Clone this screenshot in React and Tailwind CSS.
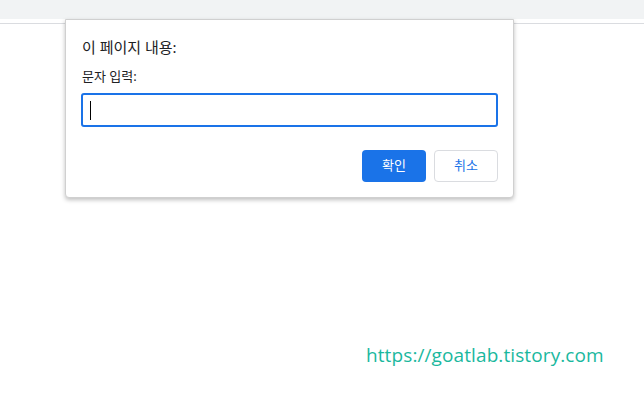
export default function App() {
  return (
    <div
      className="relative w-[644px] h-[413px] bg-white overflow-hidden"
      style={{ fontFamily: '"Noto Sans", "Noto Sans CJK KR", sans-serif' }}
    >
      {/* browser chrome strip */}
      <div className="h-[19px] bg-[#f1f3f4]" />
      <div className="h-[4px]" />
      <div className="h-px bg-[#dadce0]" />

      {/* prompt dialog */}
      <div className="absolute left-[65px] top-[19px] w-[449px] h-[179px] bg-white border border-[#d0d0d0] rounded-b-[4px] shadow-[0_2px_4px_rgba(0,0,0,0.25)] px-[15px]">
        <div className="pt-[17px] pl-px text-[15px] leading-[20px] text-[#202124]">이 페이지 내용:</div>
        <div className="mt-[10px] pl-px text-[13px] leading-[18px] text-[#202124]">문자 입력:</div>
        <div className="mt-[8px] h-[34px] border-2 border-[#1a73e8] rounded-[3px] flex items-center pl-[7px]">
          <div className="w-px h-[19px] bg-black" />
        </div>
        <div className="mt-[23px] flex justify-end gap-[8px]">
          <button className="w-[64px] h-[32px] rounded-[4px] bg-[#1a73e8] text-white text-[13px]">확인</button>
          <button className="w-[64px] h-[32px] rounded-[4px] bg-white border border-[#dadce0] text-[#1a73e8] text-[13px]">취소</button>
        </div>
      </div>

      <div className="absolute left-[366px] top-[342px] text-[19px] leading-[26px] tracking-[0.1px] text-[#1ab89e]" style={{ fontFamily: '"Open Sans", sans-serif' }}>
        https://goatlab.tistory.com
      </div>
    </div>
  )
}
